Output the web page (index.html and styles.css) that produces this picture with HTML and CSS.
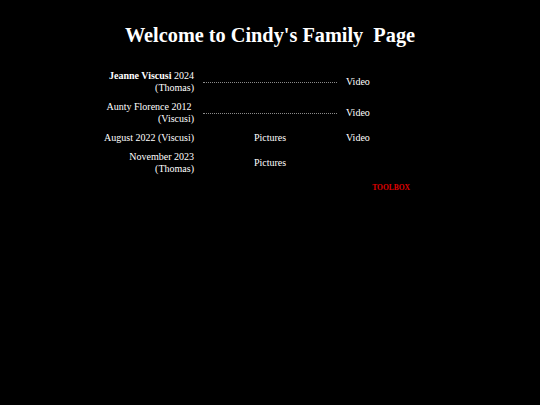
FILE: index.html
```html
<!DOCTYPE html>
<html>
<head>
<meta charset="utf-8">
<link rel="stylesheet" href="styles.css">
</head>
<body>
<h1 class="title">Welcome to Cindy's Family&nbsp; Page</h1>
<table class="family">
  <tr>
    <td class="name"><b>Jeanne Viscusi</b> 2024<br>(Thomas)</td>
    <td class="mid"><div class="rule"></div></td>
    <td class="vid">Video</td>
  </tr>
  <tr>
    <td class="name">Aunty Florence 2012&nbsp;<br>(Viscusi)</td>
    <td class="mid"><div class="rule"></div></td>
    <td class="vid">Video</td>
  </tr>
  <tr>
    <td class="name">August 2022 (Viscusi)</td>
    <td class="mid">Pictures</td>
    <td class="vid">Video</td>
  </tr>
  <tr>
    <td class="name">November 2023<br>(Thomas)</td>
    <td class="mid">Pictures</td>
    <td class="vid"></td>
  </tr>
  <tr>
    <td></td>
    <td></td>
    <td class="tool">TOOLBOX</td>
  </tr>
</table>
</body>
</html>
```
FILE: styles.css
```css
html, body {
  background: #000;
  color: #fff;
  margin: 0;
  padding: 0;
}
body {
  font-family: "Liberation Serif", "Times New Roman", serif;
}
.title {
  font-size: 20.3px;
  font-weight: bold;
  text-align: center;
  margin: 23px 0 19px 0;
  line-height: 24px;
}
.family {
  width: 340px;
  margin: 0 auto;
  border-collapse: collapse;
  font-size: 10px;
  line-height: 12px;
}
.family td {
  padding: 4px 0 3px 0;
  vertical-align: middle;
}
.name {
  width: 94px;
  text-align: right;
  padding-right: 6px !important;
  white-space: nowrap;
}
.mid {
  width: 134px;
  text-align: center;
  padding-left: 3px !important;
  padding-right: 3px !important;
}
.vid {
  width: 94px;
  padding-left: 6px !important;
}
.rule {
  border-top: 1px dotted #8a8a8a;
}
.tool {
  text-align: right;
  padding-right: 30px !important;
  color: #e00000;
  font-weight: bold;
  font-size: 7.5px;
  line-height: 10px;
  padding-top: 5px !important;
}
```
